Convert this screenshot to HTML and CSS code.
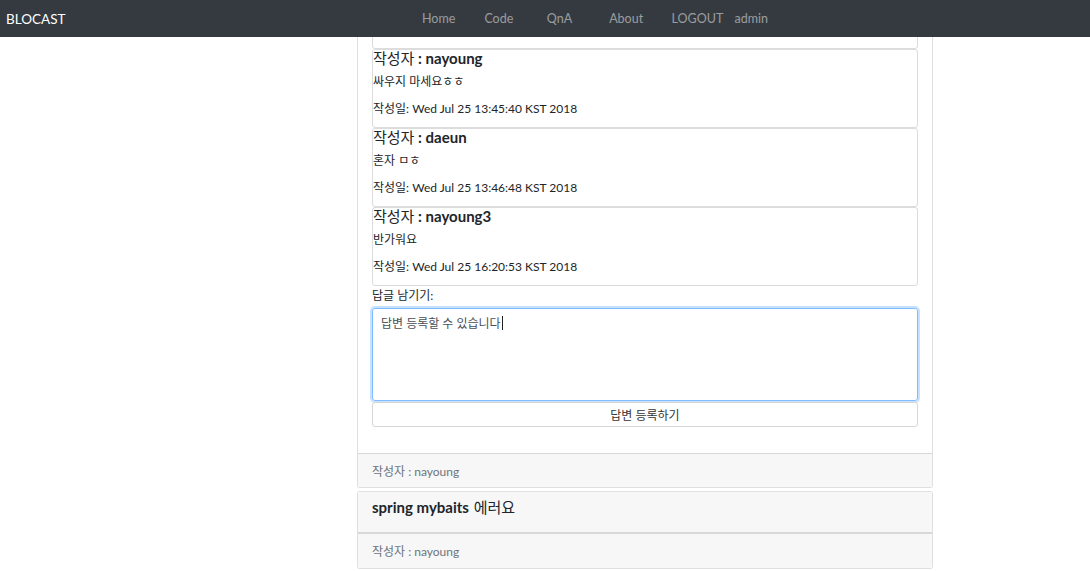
FILE: index.html
```html
<!DOCTYPE html>
<html lang="ko">
<head>
<meta charset="utf-8">
<title>BLOCAST</title>
<link rel="stylesheet" href="styles.css">
</head>
<body>
<nav class="navbar">
  <a class="brand">BLOCAST</a>
  <ul class="nav">
    <li>Home</li>
    <li>Code</li>
    <li>QnA</li>
    <li>About</li>
    <li>LOGOUT</li>
    <li>admin</li>
  </ul>
</nav>
<main class="layout">
  <div class="column">
    <section class="card">
      <div class="card-body">
        <div class="reply reply-partial"></div>
        <div class="reply">
          <h5 class="reply-author"><span class="ko">작성자</span> : nayoung</h5>
          <p class="reply-text">싸우지 마세요ㅎㅎ</p>
          <p class="reply-date">작성일: Wed Jul 25 13:45:40 KST 2018</p>
        </div>
        <div class="reply">
          <h5 class="reply-author"><span class="ko">작성자</span> : daeun</h5>
          <p class="reply-text">혼자 ㅁㅎ</p>
          <p class="reply-date">작성일: Wed Jul 25 13:46:48 KST 2018</p>
        </div>
        <div class="reply">
          <h5 class="reply-author"><span class="ko">작성자</span> : nayoung3</h5>
          <p class="reply-text">반가워요</p>
          <p class="reply-date">작성일: Wed Jul 25 16:20:53 KST 2018</p>
        </div>
        <label class="reply-label">답글 남기기:</label>
        <div class="textarea">답변 등록할 수 있습니다<span class="caret"></span></div>
        <button class="submit">답변 등록하기</button>
      </div>
      <div class="card-footer">작성자 : nayoung</div>
    </section>
    <section class="card">
      <div class="card-header"><span class="title">spring mybaits</span> 에러요</div>
      <div class="card-footer card-footer-tall">작성자 : nayoung</div>
    </section>
  </div>
</main>
</body>
</html>
```
FILE: styles.css
```css
* { box-sizing: border-box; }
html, body { margin: 0; padding: 0; background: #fff; }
body {
  font-family: Lato, "Noto Sans CJK KR", sans-serif;
  font-size: 12px;
  color: #212529;
}
.navbar {
  position: fixed;
  top: 0; left: 0; right: 0;
  height: 37px;
  background: #343a40;
  display: flex;
  align-items: center;
  z-index: 10;
}
.brand {
  color: #fff;
  font-size: 13.5px;
  font-weight: 400;
  padding-left: 6px;
  width: 422px;
}
.nav {
  list-style: none;
  margin: 0;
  padding: 0;
  display: flex;
}
.nav li {
  width: 62.4px;
  color: rgba(255,255,255,.5);
  font-size: 12.5px;
}
.nav li:nth-child(5) { width: 63px; }
.layout {
  display: grid;
  grid-template-columns: 357px 576px;
}
.column {
  grid-column: 2;
  display: flex;
  flex-direction: column;
  gap: 3px;
}
.card {
  border: 1px solid rgba(0,0,0,.125);
  border-radius: 3px;
  background: #fff;
}
.card-body {
  padding: 14px 14px 26px;
  display: flex;
  flex-direction: column;
}
.reply {
  border: 1px solid #dcdcdc;
  border-radius: 3px;
  height: 79px;
}
.reply-partial { height: 34px; }
.reply-author {
  margin: 0;
  font-size: 15px;
  font-weight: 700;
  line-height: 17px;
  color: #212529;
}
.reply-author .ko { font-weight: 400; }
.reply-text {
  margin: 6px 0 9px;
  line-height: 18px;
}
.reply-date {
  margin: 0;
  line-height: 18px;
}
.reply-label {
  margin: 1px 0 4px;
  line-height: 17px;
}
.textarea {
  height: 93px;
  border: 1px solid #80bdff;
  border-radius: 3px;
  box-shadow: 0 0 0 2px rgba(0,123,255,.22);
  padding: 6px 8px;
  color: #495057;
  line-height: 17px;
}
.caret {
  display: inline-block;
  width: 1px;
  height: 14px;
  background: #222;
  vertical-align: -2px;
  margin-left: 1px;
}
.submit {
  margin-top: 1px;
  height: 25px;
  border: 1px solid #d6d6d6;
  border-radius: 3px;
  background: #fff;
  color: #333;
  font-family: inherit;
  font-size: 12px;
  padding: 0;
}
.card-header {
  background: #f7f7f7;
  border-bottom: 1px solid rgba(0,0,0,.125);
  height: 41px;
  padding: 6px 14px 0;
  font-size: 15px;
  line-height: 18px;
  color: #212529;
}
.card-header .title { font-weight: 700; margin-right: 1px; }
.card-footer {
  background: #f7f7f7;
  border-top: 1px solid rgba(0,0,0,.125);
  height: 34px;
  padding: 0 14px 1px;
  display: flex;
  align-items: center;
  color: #6c757d;
  font-size: 12px;
}
.card-footer-tall { height: 35px; }
```
